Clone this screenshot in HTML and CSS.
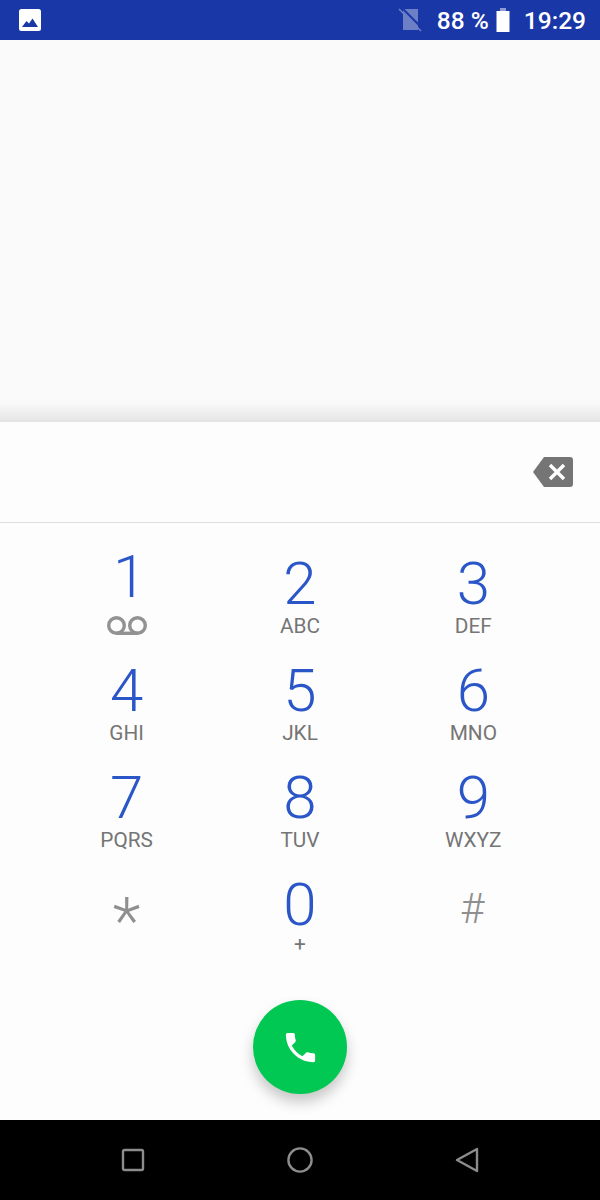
FILE: index.html
```html
<!DOCTYPE html>
<html lang="fr">
<head>
  <meta charset="UTF-8" />
  <title>Téléphone</title>
  <link rel="stylesheet" href="styles.css">
</head>
<body>
  <div class="screen">
    <!-- Barre d'etat -->
    <div class="status-bar">
      <svg class="status-pic" width="22" height="22" viewBox="0 0 22 22">
        <rect width="22" height="22" rx="2.5" fill="#fff"/>
        <path d="M3 18 L7.5 12 L10 14.5 L13.5 9.5 L19 18 Z" fill="#1a37a8"/>
      </svg>
      <div class="status-right">
        <svg class="status-sim" width="24" height="24" viewBox="0 0 24 24">
          <path d="M5 1 H20 V22 H5 Z" fill="#6d80c6"/>
          <path d="M3 -1 L25 21" stroke="#1a37a8" stroke-width="2"/>
          <path d="M1 1 L23 23" stroke="#6d80c6" stroke-width="1.6"/>
        </svg>
        <span class="status-text status-pct">88 %</span>
        <svg class="status-batt" width="14" height="24" viewBox="0 0 14 24">
          <rect x="4" y="0" width="6" height="3" fill="#8c9bd4"/>
          <rect x="0.5" y="3" width="13" height="21" fill="#fff"/>
        </svg>
        <span class="status-text">19:29</span>
      </div>
    </div>

    <div class="recent"></div>

    <div class="dialer">
      <div class="digits-row">
        <svg class="backspace" width="40" height="30" viewBox="0 0 40 30">
          <path d="M11 0 H37 Q40 0 40 3 V27 Q40 30 37 30 H11 L0 15 Z" fill="#757575"/>
          <path d="M17 8 L31 22 M31 8 L17 22" stroke="#fff" stroke-width="3.4"/>
        </svg>
      </div>

      <div class="keypad">
        <div class="key key-one">
          <span class="num">1</span>
          <svg class="voicemail" width="40" height="19" viewBox="0 0 40 19">
            <circle cx="9.5" cy="9.5" r="7.8" fill="none" stroke="#929292" stroke-width="3.4"/>
            <circle cx="30.5" cy="9.5" r="7.8" fill="none" stroke="#929292" stroke-width="3.4"/>
            <path d="M9.5 17.3 H30.5" stroke="#929292" stroke-width="3.4"/>
          </svg>
        </div>
        <div class="key"><span class="num">2</span><span class="sub">ABC</span></div>
        <div class="key"><span class="num">3</span><span class="sub">DEF</span></div>
        <div class="key"><span class="num">4</span><span class="sub">GHI</span></div>
        <div class="key"><span class="num">5</span><span class="sub">JKL</span></div>
        <div class="key"><span class="num">6</span><span class="sub">MNO</span></div>
        <div class="key"><span class="num">7</span><span class="sub">PQRS</span></div>
        <div class="key"><span class="num">8</span><span class="sub">TUV</span></div>
        <div class="key"><span class="num">9</span><span class="sub">WXYZ</span></div>
        <div class="key"><span class="num sym sym-star">*</span></div>
        <div class="key"><span class="num">0</span><span class="sub sub-plus">+</span></div>
        <div class="key"><span class="num sym sym-hash">#</span></div>
      </div>

      <div class="call-wrap">
        <button class="call-btn">
          <svg width="39" height="39" viewBox="0 0 24 24">
            <path d="M6.62 10.79c1.44 2.83 3.76 5.14 6.59 6.59l2.2-2.2c.27-.27.67-.36 1.02-.24 1.12.37 2.33.57 3.57.57.55 0 1 .45 1 1V20c0 .55-.45 1-1 1-9.39 0-17-7.61-17-17 0-.55.45-1 1-1h3.5c.55 0 1 .45 1 1 0 1.25.2 2.45.57 3.57.11.35.03.74-.25 1.02l-2.2 2.2z" fill="#fff"/>
          </svg>
        </button>
      </div>
    </div>

    <!-- Barre de navigation -->
    <div class="nav-bar">
      <svg width="24" height="24" viewBox="0 0 24 24">
        <rect x="2" y="2" width="20" height="20" rx="1.5" fill="none" stroke="#8c8c8c" stroke-width="2.4"/>
      </svg>
      <svg width="26" height="26" viewBox="0 0 26 26">
        <circle cx="13" cy="13" r="11.6" fill="none" stroke="#8c8c8c" stroke-width="2.4"/>
      </svg>
      <svg width="24" height="26" viewBox="0 0 24 26">
        <path d="M2 13 L22 2 V24 Z" fill="none" stroke="#8c8c8c" stroke-width="2.4" stroke-linejoin="round"/>
      </svg>
    </div>
  </div>
</body>
</html>
```

FILE: styles.css
```css
html, body {
  margin: 0;
  padding: 0;
}
.screen {
  width: 600px;
  height: 1200px;
  display: flex;
  flex-direction: column;
  background-color: #fafafa;
  font-family: Roboto, sans-serif;
  overflow: hidden;
}
.status-bar {
  height: 40px;
  flex: none;
  box-sizing: border-box;
  padding: 0 14px 0 19px;
  display: flex;
  align-items: center;
  justify-content: space-between;
  background-color: #1a37a8;
}
.status-right {
  display: flex;
  align-items: center;
}
.status-text {
  color: #fff;
  font-size: 24.5px;
  font-weight: 500;
}
.status-pct {
  margin: 0 7px 0 15px;
}
.status-batt {
  margin-right: 14px;
}
.recent {
  flex: 1;
  background: linear-gradient(to bottom, #fafafa 0, #fafafa 362px, #e4e4e4 382px);
}
.dialer {
  height: 698px;
  flex: none;
  background-color: #fdfdfd;
  display: flex;
  flex-direction: column;
}
.digits-row {
  height: 101px;
  flex: none;
  box-sizing: border-box;
  border-bottom: 1px solid #dedede;
  padding: 0 27px 0 0;
  display: flex;
  align-items: center;
  justify-content: flex-end;
}
.keypad {
  width: 520px;
  margin: 0 auto;
  display: grid;
  grid-template-columns: repeat(3, 173.33px);
  grid-auto-rows: 107px;
  padding-top: 32px;
}
.key {
  display: flex;
  flex-direction: column;
  align-items: center;
}
.num {
  font-size: 60px;
  font-weight: 300;
  line-height: 58px;
  color: #2a56c8;
}
.sub {
  font-size: 20.8px;
  line-height: 24px;
  padding-top: 1px;
  color: #757575;
}
.sub-plus {
  line-height: 18px;
}
.key-one .num {
  margin-top: -7px;
  margin-left: 6px;
}
.voicemail {
  margin-top: 10px;
}
.sym {
  color: #8f8f8f;
}
.sym-star {
  font-size: 65px;
  margin-top: 16px;
}
.sym-hash {
  font-size: 42px;
  margin-top: 4px;
  margin-right: 2px;
}
.call-wrap {
  display: flex;
  justify-content: center;
  margin-top: 17px;
}
.call-btn {
  width: 94px;
  height: 94px;
  padding: 0;
  border: none;
  border-radius: 50%;
  background-color: #00c853;
  box-shadow: 0 8px 14px rgba(0,0,0,0.22);
  display: flex;
  align-items: center;
  justify-content: center;
}
.nav-bar {
  height: 80px;
  flex: none;
  background-color: #000;
  box-sizing: border-box;
  padding: 0 121px;
  display: flex;
  align-items: center;
  justify-content: space-between;
}
```
